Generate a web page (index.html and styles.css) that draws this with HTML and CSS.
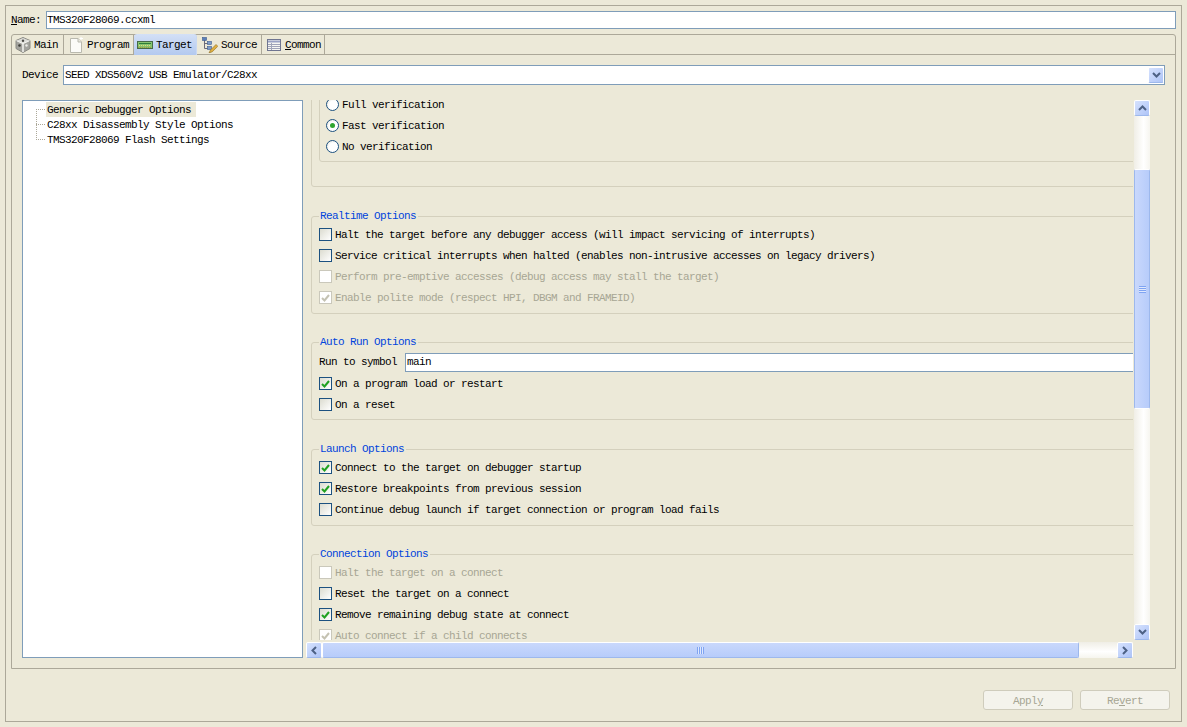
FILE: index.html
```html
<!DOCTYPE html>
<html lang="en">
<head>
<meta charset="utf-8">
<title>TMS320F28069.ccxml</title>
<link rel="stylesheet" href="styles.css">
</head>
<body>
<div class="shell">
  <div class="name-row">
    <label class="name-label"><u>N</u>ame:</label>
    <div class="field name-field">TMS320F28069.ccxml</div>
  </div>
  <div class="folder">
    <div class="tabs">
      <div class="tab tab-main">
        <svg class="tab-icon" viewBox="0 0 16 16" width="16" height="16"><path d="M8 .5 15 3.500V11.500L8 15.500 1 11.500V3.500Z" fill="#a3a39e" stroke="#8a8a84"/><path d="M1.500 3.700 8 6.700 14.500 3.700 8 1Z" fill="#dededa"/><path d="M8 6.700V15" stroke="#f4f4f0" stroke-width="1.500"/><path d="M1.500 3.700 8 6.700 14.500 3.700" fill="none" stroke="#f4f4f0"/><circle cx="8" cy="3.700" r="1.200" fill="#4a4a46"/><circle cx="4.500" cy="8.500" r="1.300" fill="#3e3e3a"/><circle cx="11.500" cy="8.500" r="1.200" fill="#ecece8"/></svg>
        <span>Main</span>
      </div>
      <div class="tab tab-program">
        <svg class="tab-icon" viewBox="0 0 16 16" width="16" height="16"><path d="M2.500 1.500H10L13.500 5V15.500H2.500Z" fill="#fbfbf8" stroke="#b9b9ae"/><path d="M10 1.500V5H13.500" fill="#e8e8e0" stroke="#b9b9ae"/><path d="M13 0V3M11.500 1.500H15" stroke="#ffffff"/></svg>
        <span>Program</span>
      </div>
      <div class="tab tab-target is-active">
        <svg class="tab-icon" viewBox="0 0 16 16" width="16" height="16"><rect x="0.500" y="4.500" width="15" height="7" fill="#86c46e" stroke="#466a48"/><path d="M2 6.500h12" stroke="#2e7d3a"/><path d="M2 8.500h12" stroke="#e3d97a" stroke-dasharray="1 1"/><path d="M1 10.500h14" stroke="#a8983a" stroke-dasharray="1 1"/></svg>
        <span>Target</span>
      </div>
      <div class="tab tab-source">
        <svg class="tab-icon" viewBox="0 0 16 16" width="16" height="16"><path d="M2.500 2V11.500H6M2.500 6.500H6" fill="none" stroke="#6a6a78"/><rect x="0.500" y="0.500" width="4" height="3" fill="#5b7fb8" stroke="#3f5d90" stroke-width=".6"/><rect x="5.500" y="4.500" width="4" height="3" fill="#7d9bc8" stroke="#3f5d90" stroke-width=".6"/><rect x="5.500" y="9.500" width="4" height="3" fill="#7d9bc8" stroke="#3f5d90" stroke-width=".6"/><path d="M7 16 8.500 13 14 7.500 15.800 9.300 10.300 14.800Z" fill="#e0b040" stroke="#8a6a20" stroke-width=".6"/></svg>
        <span>Source</span>
      </div>
      <div class="tab tab-common">
        <svg class="tab-icon" viewBox="0 0 16 16" width="16" height="16"><rect x="1.500" y="2.500" width="13" height="11" fill="#f6f6f2" stroke="#6f7590"/><path d="M2 4.500h12" stroke="#9aa2c4" stroke-width="2"/><path d="M2 7.500h12M2 9.500h12M2 11.500h12M5.500 6v7" stroke="#a0a4b8"/></svg>
        <span><u>C</u>ommon</span>
      </div>
    </div>
    <div class="folder-body">
      <div class="device-row">
        <label class="device-label">Device</label>
        <div class="field combo">
          <span class="combo-text">SEED XDS560V2 USB Emulator/C28xx</span>
          <div class="sb-btn combo-btn"><svg viewBox="0 0 9 6" width="9" height="6"><path d="M1 1 4.500 4.500 8 1" fill="none" stroke="#4d6185" stroke-width="2"/></svg></div>
        </div>
      </div>
      <div class="split">
        <ul class="tree">
          <li class="tree-item is-selected"><span class="tree-text">Generic Debugger Options</span></li>
          <li class="tree-item"><span class="tree-text">C28xx Disassembly Style Options</span></li>
          <li class="tree-item"><span class="tree-text">TMS320F28069 Flash Settings</span></li>
        </ul>
        <div class="scroll-area">
          <div class="scroll-row">
            <div class="viewport">
              <div class="content">
                <div class="outer-tail">
                  <div class="inner-tail">
                    <div class="opt"><span class="radio"></span><span>Full verification</span></div>
                    <div class="opt"><span class="radio is-on"></span><span>Fast verification</span></div>
                    <div class="opt"><span class="radio"></span><span>No verification</span></div>
                  </div>
                </div>
                <fieldset class="group group-realtime">
                  <legend>Realtime Options</legend>
                  <div class="opt"><span class="check"></span><span>Halt the target before any debugger access (will impact servicing of interrupts)</span></div>
                  <div class="opt"><span class="check"></span><span>Service critical interrupts when halted (enables non-intrusive accesses on legacy drivers)</span></div>
                  <div class="opt is-disabled"><span class="check"></span><span>Perform pre-emptive accesses (debug access may stall the target)</span></div>
                  <div class="opt is-disabled"><span class="check is-on"><svg viewBox="0 0 9 8" width="9" height="8"><path d="M1 4 3.500 6.500 8 1" fill="none" stroke="#c4c2b2" stroke-width="2"/></svg></span><span>Enable polite mode (respect HPI, DBGM and FRAMEID)</span></div>
                </fieldset>
                <fieldset class="group group-autorun">
                  <legend>Auto Run Options</legend>
                  <div class="symbol-row"><span class="symbol-label">Run to symbol</span><div class="field symbol-field">main</div></div>
                  <div class="opt"><span class="check is-on"><svg viewBox="0 0 9 8" width="9" height="8"><path d="M1 4 3.500 6.500 8 1" fill="none" stroke="#21a121" stroke-width="2"/></svg></span><span>On a program load or restart</span></div>
                  <div class="opt"><span class="check"></span><span>On a reset</span></div>
                </fieldset>
                <fieldset class="group group-launch">
                  <legend>Launch Options</legend>
                  <div class="opt"><span class="check is-on"><svg viewBox="0 0 9 8" width="9" height="8"><path d="M1 4 3.500 6.500 8 1" fill="none" stroke="#21a121" stroke-width="2"/></svg></span><span>Connect to the target on debugger startup</span></div>
                  <div class="opt"><span class="check is-on"><svg viewBox="0 0 9 8" width="9" height="8"><path d="M1 4 3.500 6.500 8 1" fill="none" stroke="#21a121" stroke-width="2"/></svg></span><span>Restore breakpoints from previous session</span></div>
                  <div class="opt"><span class="check"></span><span>Continue debug launch if target connection or program load fails</span></div>
                </fieldset>
                <fieldset class="group group-connection">
                  <legend>Connection Options</legend>
                  <div class="opt is-disabled"><span class="check"></span><span>Halt the target on a connect</span></div>
                  <div class="opt"><span class="check"></span><span>Reset the target on a connect</span></div>
                  <div class="opt"><span class="check is-on"><svg viewBox="0 0 9 8" width="9" height="8"><path d="M1 4 3.500 6.500 8 1" fill="none" stroke="#21a121" stroke-width="2"/></svg></span><span>Remove remaining debug state at connect</span></div>
                  <div class="opt is-disabled"><span class="check is-on"><svg viewBox="0 0 9 8" width="9" height="8"><path d="M1 4 3.500 6.500 8 1" fill="none" stroke="#c4c2b2" stroke-width="2"/></svg></span><span>Auto connect if a child connects</span></div>
                </fieldset>
              </div>
            </div>
            <div class="vbar">
              <div class="sb-btn"><svg viewBox="0 0 9 6" width="9" height="6"><path d="M1 5 4.500 1.500 8 5" fill="none" stroke="#4d6185" stroke-width="2"/></svg></div>
              <div class="vtrack">
                <div class="vthumb"><span class="grip"></span></div>
              </div>
              <div class="sb-btn"><svg viewBox="0 0 9 6" width="9" height="6"><path d="M1 1 4.500 4.500 8 1" fill="none" stroke="#4d6185" stroke-width="2"/></svg></div>
            </div>
          </div>
          <div class="hbar">
            <div class="sb-btn"><svg viewBox="0 0 6 9" width="6" height="9"><path d="M5 1 1.500 4.500 5 8" fill="none" stroke="#4d6185" stroke-width="2"/></svg></div>
            <div class="htrack">
              <div class="hthumb"><span class="grip-h"></span></div>
            </div>
            <div class="sb-btn"><svg viewBox="0 0 6 9" width="6" height="9"><path d="M1 1 4.500 4.500 1 8" fill="none" stroke="#4d6185" stroke-width="2"/></svg></div>
          </div>
        </div>
      </div>
    </div>
  </div>
  <div class="actions">
    <button class="btn" disabled>Appl<u>y</u></button>
    <button class="btn" disabled>Re<u>v</u>ert</button>
  </div>
</div>
</body>
</html>
```
FILE: styles.css
```css
* { box-sizing: border-box; }
html, body { margin: 0; height: 100%; }
body {
  background: #ece9d8;
  padding: 5px;
  font: 11px/12px "Liberation Mono", "Noto Sans CJK SC", monospace;
  letter-spacing: -0.6px;
  color: #000;
  overflow: hidden;
}
.shell {
  height: 717px;
  border: 1px solid #aca899;
  padding: 5px;
  display: flex;
  flex-direction: column;
}
.field {
  background: #fff;
  border: 1px solid #7f9db9;
  display: flex;
  align-items: center;
  padding-left: 1px;
}
.name-row { display: flex; align-items: center; height: 18px; }
.name-label { width: 35px; }
.name-field { flex: 1; height: 18px; padding-left: 0; }
.folder {
  margin-top: 5px;
  height: 635px;
  border: 1px solid #aca899;
  border-radius: 3px 3px 0 0;
  display: flex;
  flex-direction: column;
}
.tabs { display: flex; height: 20px; flex: none; border-bottom: 1px solid #aca899; }
.tab {
  display: flex;
  align-items: center;
  border-right: 1px solid #aca899;
  gap: 3px;
}
.tab-icon { flex: none; }
.tab-main { width: 52px; padding-left: 3px; }
.tab-program { width: 70px; padding-left: 4px; }
.tab-target { width: 63px; padding-left: 3px; }
.tab-source { width: 65px; padding-left: 5px; }
.tab-common { width: 63px; padding-left: 4px; }
.is-active {
  height: 21px;
  margin-top: -1px;
  background: linear-gradient(#d3e0f6, #b3c9ef);
  border-right: 1px solid #c9d8f2;
  border-radius: 3px 3px 0 0;
}
.folder-body { flex: 1; display: flex; flex-direction: column; padding: 10px; min-height: 0; }
.device-row { display: flex; align-items: center; height: 20px; flex: none; }
.device-label { width: 41px; }
.combo { flex: 1; height: 20px; justify-content: space-between; padding: 0 0 0 1px; }
.sb-btn {
  flex: none;
  width: 16px;
  height: 16px;
  background: linear-gradient(135deg, #d6e2fe, #aec4f7);
  border: 1px solid #fff;
  border-bottom-color: #9db8ec;
  border-radius: 2px;
  display: flex;
  align-items: center;
  justify-content: center;
}
.combo-btn { height: 16px; }
.split { flex: 1; display: flex; margin-top: 15px; min-height: 0; }
.tree {
  list-style: none;
  margin: 0;
  padding: 1px 0 0 0;
  width: 281px;
  flex: none;
  background:
    repeating-linear-gradient(#aca899 0 1px, transparent 1px 2px) 13px 8px / 1px 30px no-repeat,
    #fff;
  border: 1px solid #7f9db9;
}
.tree-item {
  height: 15px;
  padding-left: 23px;
  display: flex;
  align-items: center;
  background:
    repeating-linear-gradient(90deg, #aca899 0 1px, transparent 1px 2px) 13px 7px / 10px 1px no-repeat;
}
.tree-text { padding: 0 5px 0 1px; height: 15px; display: flex; align-items: center; }
.is-selected .tree-text { background: #ece9d8; }
.scroll-area { flex: 1; display: flex; flex-direction: column; min-width: 0; margin-left: 3px; }
.scroll-row { flex: 1; display: flex; min-height: 0; }
.viewport { flex: none; width: 827px; overflow: hidden; }
.content { width: 1000px; margin-top: -22px; display: flex; flex-direction: column; }
.outer-tail {
  height: 109px;
  margin-left: 5px;
  border: 1px solid #d4d0bd;
  padding: 0 7px;
  border-radius: 3px;
}
.inner-tail {
  height: 83px;
  padding: 14px 0 0 6px;
  border: 1px solid #d4d0bd;
  border-radius: 3px;
}
.opt { display: flex; align-items: center; height: 21px; gap: 3px; }
.is-disabled { color: #a7a694; }
.radio, .check { flex: none; width: 13px; height: 13px; }
.radio {
  border: 1px solid #1c5180;
  border-radius: 50%;
  background: radial-gradient(circle at 60% 60%, #fff 50%, #dcdcd0);
  display: flex;
  align-items: center;
  justify-content: center;
}
.radio.is-on::after { content: ""; width: 5px; height: 5px; border-radius: 50%; background: #2fa52f; }
.check {
  border: 1px solid #1c5180;
  background: linear-gradient(135deg, #dcdcd0, #fff);
  display: flex;
  align-items: center;
  justify-content: center;
}
.is-disabled .check { border-color: #cac8bb; background: #fff; }
.group {
  margin: 23px 0 0 5px;
  padding: 1px 0 0 7px;
  border: 1px solid #d4d0bd;
  border-radius: 3px;
  min-width: 0;
}
.group legend {
  padding: 0 2px 0 1px;
  height: 13px;
  line-height: 13px;
  color: #0044dd;
}
.group-realtime { height: 104px; }
.group-autorun { height: 84px; margin-top: 22px; }
.group-launch { height: 83px; margin-top: 23px; }
.group-connection { height: 100px; margin-top: 22px; }
.symbol-row { display: flex; align-items: center; height: 22px; margin-top: 1px; }
.symbol-label { width: 86px; }
.symbol-field { width: 800px; height: 19px; }
.vbar { flex: none; width: 16px; margin-left: 1px; display: flex; flex-direction: column; }
.vtrack { flex: 1; display: flex; flex-direction: column; padding-top: 53px; background: linear-gradient(90deg, #f0eee6, #fff 60%, #f6f5ef); }
.vthumb {
  height: 240px;
  background: linear-gradient(90deg, #c9d8fc, #b7ccfa);
  border: 1px solid #fff;
  border-left-color: #9db8ec;
  border-right-color: #9db8ec;
  border-radius: 2px;
  display: flex;
  align-items: center;
  justify-content: center;
}
.grip { width: 7px; height: 7px; background: repeating-linear-gradient(#7fa4f2 0 1px, #dfe8fd 1px 2px); }
.hbar { flex: none; height: 16px; width: 827px; margin-top: 2px; display: flex; }
.htrack { flex: 1; display: flex; background: linear-gradient(#f0eee6, #fff 60%, #f6f5ef); }
.hthumb {
  width: 757px;
  background: linear-gradient(#c9d8fc, #b7ccfa);
  border: 1px solid #fff;
  border-bottom-color: #9db8ec;
  border-right-color: #9db8ec;
  border-radius: 2px;
  display: flex;
  align-items: center;
  justify-content: center;
}
.grip-h { width: 7px; height: 7px; background: repeating-linear-gradient(90deg, #7fa4f2 0 1px, #dfe8fd 1px 2px); }
.actions { flex: 1; display: flex; justify-content: flex-end; align-items: flex-end; gap: 7px; padding: 0 6px 6px 0; }
.btn {
  width: 90px;
  height: 20px;
  font: inherit;
  letter-spacing: inherit;
  color: #a7a694;
  background: #f4f3ec;
  border: 1px solid #cfccbc;
  border-radius: 3px;
  padding: 2px 0 0 0;
}
```
